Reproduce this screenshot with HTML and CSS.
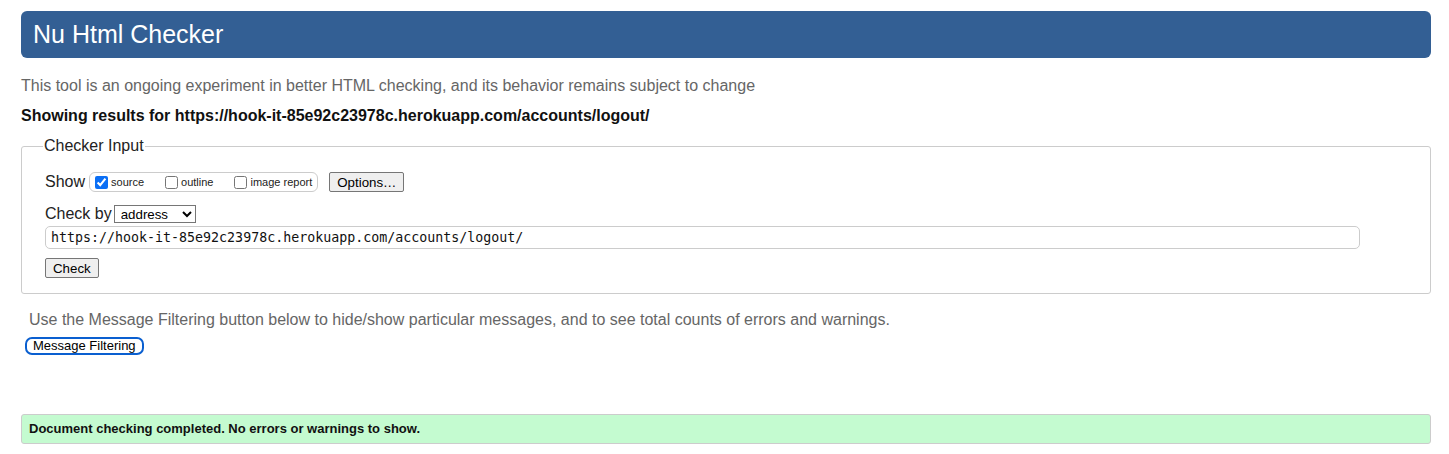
FILE: index.html
```html
<!DOCTYPE html>
<html>
<head>
<meta charset="utf-8">
<link rel="stylesheet" href="styles.css">
</head>
<body>
<h1 class="title">Nu Html Checker</h1>
<p class="intro">This tool is an ongoing experiment in better HTML checking, and its behavior remains subject to change</p>
<p class="results">Showing results for https://hook-it-85e92c23978c.herokuapp.com/accounts/logout/</p>
<fieldset class="checker">
  <legend class="legend">Checker Input</legend>
  <div class="row show-row">
    <span class="label">Show</span>
    <span class="opts">
      <label class="opt"><input type="checkbox" checked class="cb"><span>source</span></label>
      <label class="opt"><input type="checkbox" class="cb"><span>outline</span></label>
      <label class="opt"><input type="checkbox" class="cb"><span>image report</span></label>
    </span>
    <button class="btn">Options…</button>
  </div>
  <div class="row by-row">
    <span class="label">Check by</span>
    <select class="sel"><option>address</option></select>
  </div>
  <input class="url" type="text" value="https://hook-it-85e92c23978c.herokuapp.com/accounts/logout/">
  <div class="row check-row"><button class="btn">Check</button></div>
</fieldset>
<p class="filter-note">Use the Message Filtering button below to hide/show particular messages, and to see total counts of errors and warnings.</p>
<button class="btn filter-btn">Message Filtering</button>
<div class="success">Document checking completed. No errors or warnings to show.</div>
</body>
</html>
```
FILE: styles.css
```css
html, body { margin: 0; padding: 0; background: #fff; }
body {
  font-family: "Liberation Sans", Arial, sans-serif;
  color: #222;
  padding: 11px 18px 0 21px;
}
.title {
  margin: 0;
  height: 47px;
  box-sizing: border-box;
  background: #335f94;
  color: #fff;
  border-radius: 6px;
  font-size: 25px;
  font-weight: normal;
  line-height: 47px;
  padding: 0 12px;
}
.intro {
  margin: 18px 0 0;
  font-size: 16px;
  line-height: 20px;
  color: #666;
}
.results {
  margin: 10px 0 0;
  font-size: 16px;
  line-height: 20px;
  font-weight: bold;
  color: #111;
}
.checker {
  margin: 11px 0 0;
  border: 1px solid #ccc;
  border-radius: 3px;
  padding: 6px 23px 15px 23px;
  min-width: 0;
}
.legend {
  font-size: 16px;
  color: #222;
  padding: 0 1px;
  margin-left: -2px;
}
.row { display: flex; align-items: center; }
.label { font-size: 16px; color: #222; }
.show-row { height: 22px; margin-top: 10px; }
.opts {
  display: inline-flex;
  align-items: center;
  border: 1px solid #ccc;
  border-radius: 6px;
  height: 18px;
  margin-left: 4px;
  padding: 0 5px 0 5px;
}
.opt { display: inline-flex; align-items: center; font-size: 11px; color: #222; margin-right: 21px; }
.opt:last-child { margin-right: 0; }
.cb { margin: 0 3px 0 0; width: 13px; height: 13px; accent-color: #0b6ff5; }
.btn {
  font-family: "Liberation Sans", Arial, sans-serif;
  font-size: 13.3px;
  background: #efefef;
  border: 1px solid #767676;
  border-radius: 2px;
  padding: 1px 7px;
  color: #000;
  height: 20px;
}
.show-row .btn { margin-left: 11px; }
.by-row { margin-top: 12px; }
.sel {
  margin-left: 2px;
  font-family: "Liberation Sans", Arial, sans-serif;
  font-size: 13.3px;
  height: 18px;
  width: 82px;
  border: 1px solid #767676;
  border-radius: 0;
  background: #fff;
  padding: 0 2px;
}
.url {
  display: block;
  margin-top: 3px;
  box-sizing: border-box;
  width: 1315px;
  height: 23px;
  border: 1px solid #ccc;
  border-radius: 5px;
  font-family: "DejaVu Sans Mono", monospace;
  font-size: 13.3px;
  padding: 0 5px;
  color: #111;
}
.check-row { margin-top: 9px; }
.filter-note {
  margin: 16px 0 0 8px;
  font-size: 16px;
  line-height: 20px;
  color: #666;
}
.filter-btn {
  display: block;
  margin: 7px 0 0 4px;
  height: 18px;
  padding: 0 6px;
  border: 2px solid #0a5fd0;
  border-radius: 7px;
  background: #fff;
  line-height: 14px;
  font-size: 13px;
}
.success {
  margin-top: 59px;
  height: 30px;
  box-sizing: border-box;
  border: 1px solid #ccc;
  border-radius: 3px;
  background: #c4fbd0;
  font-size: 13px;
  font-weight: bold;
  color: #111;
  padding: 0 7px;
  line-height: 28px;
}
```
